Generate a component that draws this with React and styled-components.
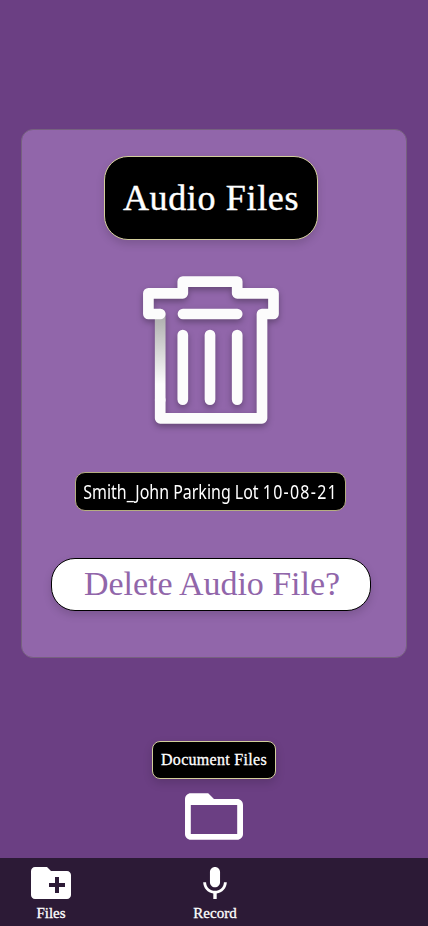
import React from 'react';
import styled, { createGlobalStyle } from 'styled-components';

const COLORS = {
  page: '#6b3f83',
  card: '#9166aa',
  nav: '#2c1a36',
  edge: '#d3cf9b',
};

const NAV_ITEMS = [
  {
    label: 'Files',
    width: 40,
    viewBox: '2 4 20 16',
    path: 'M20 6h-8l-2-2H4c-1.11 0-1.99.89-1.99 2L2 18c0 1.11.89 2 2 2h16c1.11 0 2-.89 2-2V8c0-1.11-.89-2-2-2zm-1 8h-3v3h-2v-3h-3v-2h3V9h2v3h3v2z',
  },
  {
    label: 'Record',
    width: 24,
    viewBox: '5 2 14 19',
    path: 'M12 14c1.66 0 2.99-1.34 2.99-3L15 5c0-1.66-1.34-3-3-3S9 3.34 9 5v6c0 1.66 1.34 3 3 3zm5.3-3c0 3-2.54 5.1-5.3 5.1S6.7 14 6.7 11H5c0 3.41 2.72 6.23 6 6.72V21h2v-3.28c3.28-.48 6-3.3 6-6.72h-1.7z',
  },
];

const TrashIcon = () => (
  <TrashSvg viewBox="143 276 136 148" fill="none">
    <defs>
      <linearGradient
        id="side"
        gradientUnits="userSpaceOnUse"
        x1="0"
        y1="318"
        x2="0"
        y2="384"
      >
        <stop offset="0" stopColor="#b0b0b0" />
        <stop offset="1" stopColor="#fcfcfc" />
      </linearGradient>
    </defs>
    <path d="M160.2 314V400" stroke="url(#side)" />
    <path d="M160.2 400V418.3H262V314H273.5V293.3H237.2V281.6H182.8V293.3H148.4V314H160.2" />
    <path d="M183 314H237.2M182.8 335V399.6M210 335V399.6M237.2 335V399.6" />
  </TrashSvg>
);

const App = () => (
  <>
    <GlobalStyle />
    <Screen>
      <Card>
        <Title>
          <Text $spacing={0.65}>Audio Files</Text>
        </Title>
        <TrashIcon />
        <FileName>
          <FileNameText>
            Smith_John Parking Lot <FileDate>10-08-21</FileDate>
          </FileNameText>
        </FileName>
        <DeleteButton type="button">
          <Text $spacing={-0.05}>Delete Audio File?</Text>
        </DeleteButton>
      </Card>
      <Documents>
        <DocumentLabel>
          <Text $spacing={0.3}>Document Files</Text>
        </DocumentLabel>
        <FolderSvg viewBox="2 4 20 16">
          <path d="M20 6h-8l-2-2H4c-1.1 0-1.99.9-1.99 2L2 18c0 1.1.9 2 2 2h16c1.1 0 2-.9 2-2V8c0-1.1-.9-2-2-2zm0 12H4V8h16v10z" />
        </FolderSvg>
      </Documents>
      <NavBar>
        {NAV_ITEMS.map(({ label, width, viewBox, path }) => (
          <NavItem key={label}>
            <NavSvg viewBox={viewBox} $width={width}>
              <path d={path} />
            </NavSvg>
            <NavLabel>{label}</NavLabel>
          </NavItem>
        ))}
      </NavBar>
    </Screen>
  </>
);

const GlobalStyle = createGlobalStyle`
  * {
    box-sizing: border-box;
  }
  body {
    margin: 0;
    background: ${COLORS.page};
    font-family: 'Liberation Serif', serif;
  }
`;
const Screen = styled.main`
  display: flex;
  flex-direction: column;
  width: 428px;
  height: 926px;
  padding-top: 129px;
  overflow: hidden;
  background: ${COLORS.page};
`;
const Card = styled.section`
  display: flex;
  flex-direction: column;
  align-items: center;
  width: 386px;
  height: 529px;
  flex: none;
  margin-left: 21px;
  padding: 26px 6px 0 0;
  border: 1px solid #76617f;
  border-radius: 12px;
  background: ${COLORS.card};
`;
const Text = styled.span`
  letter-spacing: ${({ $spacing }) => $spacing}px;
  white-space: nowrap;
`;
const Title = styled.h1`
  display: flex;
  align-items: center;
  justify-content: center;
  width: 214px;
  height: 84px;
  margin: 0;
  border: 1px solid ${COLORS.edge};
  border-radius: 24px;
  background: #000;
  color: #fff;
  font-size: 36px;
  font-weight: 400;
  -webkit-text-stroke: 0.4px #fff;
  box-shadow: 0 4px 8px rgba(0, 0, 0, 0.15);
`;
const TrashSvg = styled.svg`
  width: 136px;
  height: 148px;
  margin-top: 36px;
  overflow: visible;
  stroke: #fcfcfc;
  stroke-width: 10.7;
  stroke-linecap: round;
  stroke-linejoin: round;
  filter: drop-shadow(0 3px 3px rgba(0, 0, 0, 0.3));
`;
const FileName = styled.div`
  display: flex;
  align-items: center;
  justify-content: center;
  width: 271px;
  height: 39px;
  margin: 48px 1px 0 0;
  padding-top: 1px;
  border: 1px solid #b5ae80;
  border-radius: 10px;
  background: #000;
  color: #fff;
`;
const FileNameText = styled.span`
  font-family: 'Noto Sans', sans-serif;
  font-size: 19px;
  white-space: nowrap;
  transform: scaleX(0.84);
`;
const FileDate = styled.span`
  letter-spacing: 1.5px;
`;
const DeleteButton = styled.button`
  display: flex;
  align-items: center;
  justify-content: center;
  width: 320px;
  height: 53px;
  margin-top: 47px;
  padding: 0 0 1px 2px;
  border: 1px solid #000;
  border-radius: 24px;
  background: #fff;
  color: ${COLORS.card};
  font-family: inherit;
  font-size: 34px;
  box-shadow: 0 4px 8px rgba(0, 0, 0, 0.15);
`;
const Documents = styled.section`
  display: flex;
  flex-direction: column;
  align-items: center;
  margin-top: 83px;
`;
const DocumentLabel = styled.div`
  display: flex;
  align-items: center;
  justify-content: center;
  width: 124px;
  height: 38px;
  border: 1px solid ${COLORS.edge};
  border-radius: 8px;
  background: #000;
  color: #fff;
  font-size: 16px;
  -webkit-text-stroke: 0.3px #fff;
  box-shadow: 0 4px 10px rgba(0, 0, 0, 0.15);
`;
const FolderSvg = styled.svg`
  width: 58px;
  height: 47px;
  margin-top: 14px;
  fill: #fff;
`;
const NavBar = styled.nav`
  display: grid;
  grid-template-columns: 102px 226px;
  height: 68px;
  margin-top: auto;
  padding-top: 9px;
  background: ${COLORS.nav};
  color: #fff;
`;
const NavItem = styled.div`
  display: flex;
  flex-direction: column;
  align-items: center;
`;
const NavSvg = styled.svg`
  width: ${({ $width }) => $width}px;
  height: 32px;
  fill: #fff;
`;
const NavLabel = styled.span`
  margin-top: 6px;
  font-size: 15px;
  line-height: 17px;
  -webkit-text-stroke: 0.3px #fff;
`;

export default App;
